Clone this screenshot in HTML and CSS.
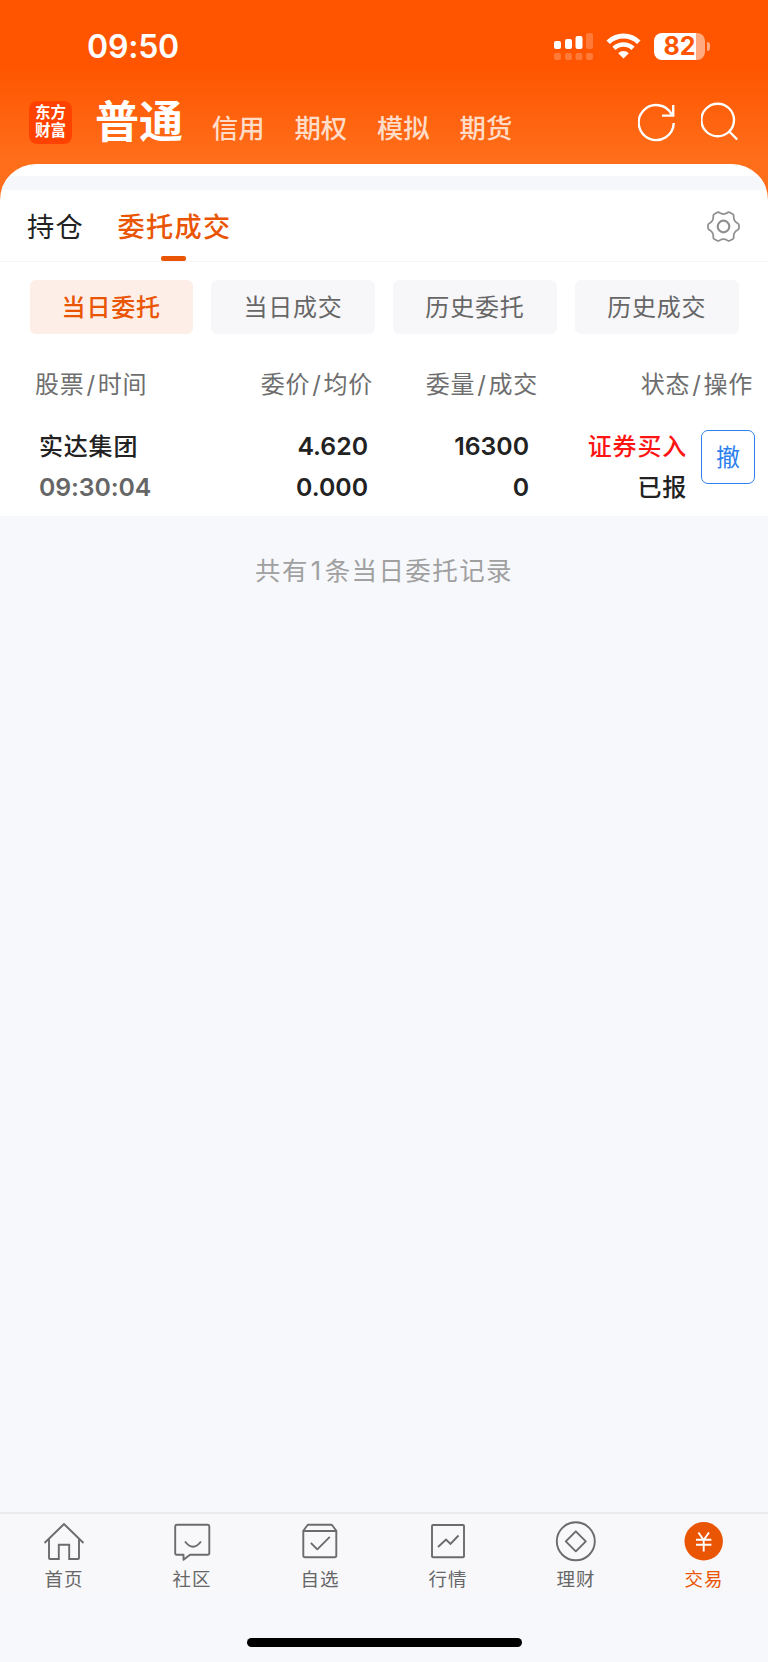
FILE: index.html
```
<!DOCTYPE html>
<html lang="zh-CN">
<head>
    <meta charset="UTF-8">
    <meta name="viewport" content="width=device-width, initial-scale=1.0">
    <title>委托成交</title>
    <link rel="stylesheet" href="styles.css">
</head>
<body>

<div class="header">
    <div class="status-bar">
        <span class="time">09:50</span>
        <div class="status-icons">
            <svg class="signal" width="39" height="27" viewBox="0 0 39 27" fill="#fff">
                <rect x="0" y="8" width="7" height="8" rx="2"/>
                <rect x="11" y="6" width="7" height="10" rx="2"/>
                <rect x="21.5" y="3" width="7" height="13" rx="2"/>
                <g opacity="0.22">
                    <rect x="32" y="0" width="7" height="16" rx="2"/>
                    <rect x="0" y="20" width="7" height="7" rx="2"/>
                    <rect x="11" y="20" width="7" height="7" rx="2"/>
                    <rect x="21.5" y="20" width="7" height="7" rx="2"/>
                    <rect x="32" y="20" width="7" height="7" rx="2"/>
                </g>
            </svg>
            <svg class="wifi" width="35" height="26" viewBox="0 0 35 26" fill="none" stroke="#fff" stroke-width="5">
                <path d="M2.2 9.3a21.8 21.8 0 0 1 30.6 0"/>
                <path d="M8 15.4a13.6 13.6 0 0 1 19 0" stroke-width="4.6"/>
                <path d="M17.5 25.5l-5.3-5.3a7.6 7.6 0 0 1 10.6 0z" fill="#fff" stroke="none"/>
            </svg>
            <div class="battery"><span>82</span></div>
            <div class="battery-tip"></div>
        </div>
    </div>
    <div class="nav">
        <div class="logo">东方<br>财富</div>
        <span class="nav-item active">普通</span>
        <span class="nav-item">信用</span>
        <span class="nav-item">期权</span>
        <span class="nav-item">模拟</span>
        <span class="nav-item">期货</span>
        <div class="nav-icons">
            <svg width="40" height="40" viewBox="0 0 40 40" fill="none" stroke="#fff" stroke-width="2.4">
                <path d="M35.7 21A17.5 17.5 0 1 1 33.8 12.6"/>
                <path d="M35.2 3v10.6H24"/>
            </svg>
            <svg width="40" height="40" viewBox="0 0 40 40" fill="none" stroke="#fff" stroke-width="2.4">
                <circle cx="16.7" cy="18" r="16.3"/>
                <path d="M28.2 29.5l8 8"/>
            </svg>
        </div>
    </div>
</div>

<div class="sheet">
    <div class="strip"></div>
    <div class="tabs">
        <span class="tab">持仓</span>
        <span class="tab active">委托成交</span>
        <svg class="gear" width="33" height="31" viewBox="0 0 34 32" fill="none" stroke="#8F8F8F" stroke-width="1.8">
            <path d="M10.7 1.4q1.3-.5 2.3.4 4 2.7 8 0 1-.9 2.3-.4l3.4 2q1.1.7.8 2-.2 5 4 7.2 1.5.8 1.5 2v3q0 1.2-1.5 2-4.2 2.2-4 7 .3 1.5-.8 2.2l-3.4 1.9q-1.3.5-2.3-.4-4-2.7-8 0-1 .9-2.3.4l-3.4-1.9q-1.1-.7-.8-2.2.2-4.8-4-7-1.5-.8-1.5-2v-3q0-1.2 1.5-2 4.2-2.2 4-7.2-.3-1.3.8-2z"/>
            <circle cx="17" cy="16" r="6" stroke-width="2.2"/>
        </svg>
    </div>
    <div class="filters">
        <span class="filter active">当日委托</span>
        <span class="filter">当日成交</span>
        <span class="filter">历史委托</span>
        <span class="filter">历史成交</span>
    </div>
    <div class="table-head">
        <span>股票<i>/</i>时间</span>
        <span>委价<i>/</i>均价</span>
        <span>委量<i>/</i>成交</span>
        <span>状态<i>/</i>操作</span>
    </div>
    <div class="order">
        <div class="col"><span class="cn">实达集团</span><span class="order-time">09:30:04</span></div>
        <div class="col"><span>4.620</span><span>0.000</span></div>
        <div class="col"><span>16300</span><span>0</span></div>
        <div class="col"><span class="cn buy">证券买入</span><span class="cn">已报</span></div>
        <button type="button" class="cancel">撤</button>
    </div>
</div>

<p class="summary">共有<span>1</span>条当日委托记录</p>

<div class="tabbar">
    <div class="tabbar-item">
        <svg width="42" height="42" viewBox="0 0 42 42" fill="none" stroke="#6b6b6b" stroke-width="1.9">
            <path d="M1.5 22L21 3l19.5 19"/>
            <path d="M6 18v19q0 1 1 1h8.8V23.8h10.4V38H35q1 0 1-1V18"/>
        </svg>
        <span>首页</span>
    </div>
    <div class="tabbar-item">
        <svg width="42" height="42" viewBox="0 0 42 42" fill="none" stroke="#6b6b6b" stroke-width="1.9" stroke-linejoin="round">
            <path d="M6 3.8h30.5q1.8 0 1.8 1.8V32q0 1.8-1.8 1.8H19l-6.5 5v-5H6q-1.8 0-1.8-1.8V5.6q0-1.8 1.8-1.8z"/>
            <path d="M14 20.5q8 10.500 16 0"/>
        </svg>
        <span>社区</span>
    </div>
    <div class="tabbar-item">
        <svg width="42" height="42" viewBox="0 0 42 42" fill="none" stroke="#6b6b6b" stroke-width="1.9" stroke-linejoin="round">
            <path d="M4.3 9.8l4.5-6h24l4.5 6v24.7q0 1.8-1.8 1.8H6.1q-1.8 0-1.8-1.8zM4.3 10h33"/>
            <path d="M11.8 21.8l6.5 6.5 12.5-12.5"/>
        </svg>
        <span>自选</span>
    </div>
    <div class="tabbar-item">
        <svg width="42" height="42" viewBox="0 0 42 42" fill="none" stroke="#6b6b6b" stroke-width="1.9">
            <rect x="5" y="4" width="32" height="32.2" rx="1"/>
            <path d="M11 26l8-7.5 4.5 4.5 8-8.5"/>
        </svg>
        <span>行情</span>
    </div>
    <div class="tabbar-item">
        <svg width="42" height="42" viewBox="0 0 42 42" fill="none" stroke="#6b6b6b" stroke-width="1.9" stroke-linejoin="round">
            <circle cx="20.8" cy="20.3" r="19"/>
            <path d="M20.8 10.3l10 10-10 10-10-10z"/>
        </svg>
        <span>理财</span>
    </div>
    <div class="tabbar-item active">
        <svg width="42" height="42" viewBox="0 0 42 42" fill="none" stroke="#fff" stroke-width="1.9">
            <circle cx="20.7" cy="20.3" r="19.2" fill="#ea5504" stroke="none"/>
            <path d="M15.4 11.500l5.3 7.500 5.3-7.500M20.7 19v11.500M13 18.700h15.400M13 23.700h15.400"/>
        </svg>
        <span>交易</span>
    </div>
</div>
<div class="home-indicator"></div>

</body>
</html>
```
FILE: styles.css
```
body {
    font-family: Inter, 'Noto Sans CJK SC', sans-serif;
    background-color: #F7F8FB;
    margin: 0;
    height: 1662px;
    color: #222;
    display: flex;
    flex-direction: column;
}
.header {
    height: 204px;
    background: linear-gradient(#FF5500 0, #FF5500 66px, #FF6E1A 160px);
    color: #FFFFFF;
}
.status-bar {
    height: 92px;
    display: flex;
    align-items: center;
    justify-content: space-between;
    box-sizing: border-box;
    padding: 0 58px 0 87px;
}
.time {
    font-size: 32px;
    font-weight: 600;
    letter-spacing: -0.2px;
}
.status-icons {
    display: flex;
    align-items: center;
}
.wifi {
    margin-left: 13px;
}
.battery {
    width: 51px;
    height: 27px;
    line-height: 27px;
    margin-left: 13px;
    border-radius: 8px;
    background: linear-gradient(to right, #FFFFFF 42px, #FFAA80 42px);
    color: #FF5500;
    font-size: 25px;
    font-weight: 700;
    text-align: center;
}
.battery-tip {
    width: 3px;
    height: 9px;
    margin-left: 2px;
    border-radius: 0 4px 4px 0;
    background-color: #FFAA80;
}
.nav {
    height: 60px;
    display: flex;
    align-items: center;
    padding: 0 27px 0 29px;
}
.logo {
    width: 43px;
    height: 43px;
    box-sizing: border-box;
    padding-top: 3px;
    border-radius: 8px;
    background-color: #FF4200;
    font-family: 'Liberation Sans', 'Noto Sans CJK SC', sans-serif;
    font-size: 15.5px;
    font-weight: 700;
    line-height: 18px;
    text-align: center;
}
.nav-item {
    margin: 12px 0 0 29.8px;
    font-size: 26.4px;
    font-weight: 500;
    line-height: 36px;
    color: #FFDCC8;
}
.nav-item.active {
    margin: 0 -1px 0 23px;
    font-size: 44px;
    font-weight: 700;
    line-height: 60px;
    color: #FFFFFF;
}
.nav-icons {
    display: flex;
    gap: 23px;
    margin-left: auto;
}
.sheet {
    margin-top: -40px;
    height: 352px;
    background-color: #FFFFFF;
    border-radius: 36px 36px 0 0;
    overflow: hidden;
}
.strip {
    height: 14px;
    margin-top: 12px;
    background-color: #F6F7FA;
}
.tabs {
    height: 71px;
    display: flex;
    align-items: center;
    padding: 0 28px 0 27px;
    border-bottom: 1px solid #F5F5F7;
}
.tab {
    position: relative;
    margin-right: 33.5px;
    font-size: 27.2px;
    letter-spacing: 1.3px;
    height: 71px;
    line-height: 75px;
}
.tab.active {
    color: #EA5504;
    font-weight: 500;
}
.tab.active::after {
    content: "";
    position: absolute;
    left: 50%;
    bottom: 0;
    width: 25px;
    height: 5px;
    margin-left: -13px;
    border-radius: 2px;
    background-color: #EA5504;
}
.gear {
    margin: 2px 0 0 auto;
}
.filters {
    display: flex;
    gap: 18.5px;
    padding: 18px 29.5px 0;
}
.filter {
    flex: 1;
    height: 54px;
    line-height: 56px;
    border-radius: 6px;
    background-color: #F7F7FA;
    color: #666;
    font-size: 24px;
    letter-spacing: 0.8px;
    text-align: center;
}
.filter.active {
    background-color: #FDEEE7;
    color: #EA5504;
    font-weight: 500;
}
.table-head {
    display: grid;
    grid-template-columns: 120px 218px 165px 215px;
    padding: 31px 15px 0 35px;
    font-size: 24px;
    letter-spacing: 0.8px;
    line-height: 40px;
    color: #6E6E6E;
    text-align: right;
}
.table-head span:first-child {
    text-align: left;
}
.table-head i {
    font-style: normal;
    margin: 0 1.8px;
}
.order {
    display: grid;
    grid-template-columns: 120px 209px 161px 158px 54px;
    padding: 20px 13px 0 39px;
    font-size: 24.8px;
    font-weight: 600;
    line-height: 41px;
}
.col {
    display: flex;
    flex-direction: column;
    padding-top: 1px;
    text-align: right;
}
.col:first-child {
    text-align: left;
}
.cn {
    font-size: 24px;
    font-weight: 500;
    letter-spacing: 0.8px;
}
.order-time {
    color: #666;
    letter-spacing: -0.1px;
}
.buy {
    color: #FF1414;
}
.cancel {
    width: 54px;
    height: 54px;
    margin: 5px 0 0 14px;
    padding: 0 0 4px;
    border: 1px solid #2E80EE;
    border-radius: 7px;
    background-color: #FFFFFF;
    color: #2E80EE;
    font-family: inherit;
    font-size: 24px;
}
.summary {
    margin: 36px 0 0;
    font-size: 25.5px;
    letter-spacing: 1.4px;
    line-height: 38px;
    color: #A0A0A0;
    text-align: center;
}
.summary span {
    margin: 0 2px;
}
.tabbar {
    display: flex;
    margin-top: auto;
    border-top: 2px solid #EBEBEE;
    background-color: #F8F8FB;
}
.tabbar-item {
    flex: 1;
    display: flex;
    flex-direction: column;
    align-items: center;
    padding-top: 7px;
    font-size: 18.5px;
    letter-spacing: 1px;
    line-height: 30px;
    color: #666;
}
.tabbar-item span {
    margin-top: 1px;
}
.tabbar-item.active {
    color: #EA5504;
}
.home-indicator {
    width: 275px;
    height: 9px;
    margin: 44px auto 15px;
    border-radius: 5px;
    background-color: #000;
}
```
